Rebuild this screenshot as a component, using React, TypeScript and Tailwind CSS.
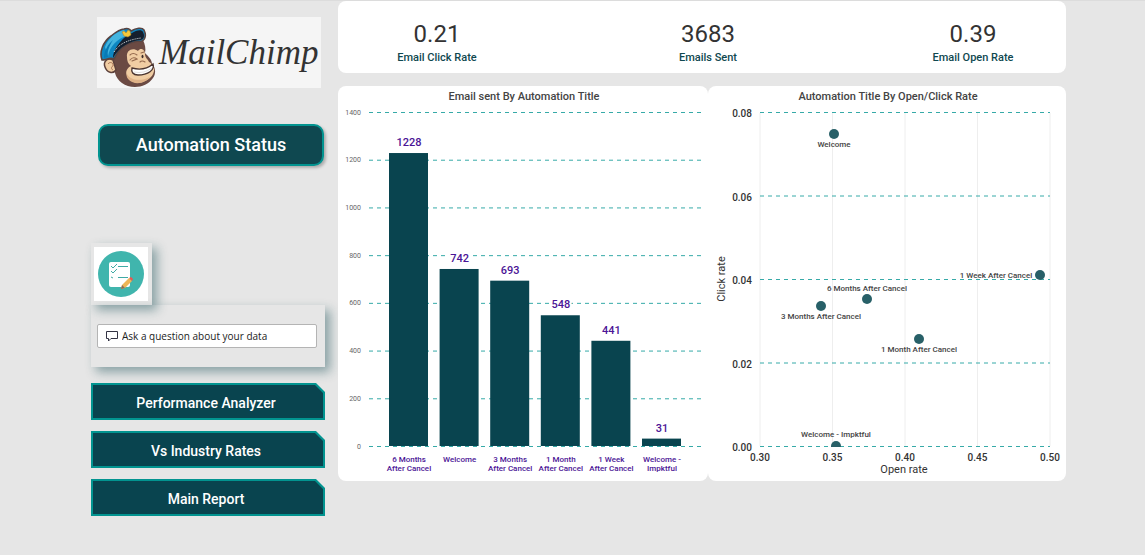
import React from "react";

const automations = [
  { lines: ["6 Months", "After Cancel"], sent: 1228 },
  { lines: ["Welcome"], sent: 742 },
  { lines: ["3 Months", "After Cancel"], sent: 693 },
  { lines: ["1 Month", "After Cancel"], sent: 548 },
  { lines: ["1 Week", "After Cancel"], sent: 441 },
  { lines: ["Welcome -", "Impktful"], sent: 31 },
];

const points = [
  { name: "Welcome", x: 126, y: 48, lx: 126, ly: 61 },
  { name: "6 Months After Cancel", x: 159, y: 213, lx: 159, ly: 205 },
  { name: "3 Months After Cancel", x: 113, y: 220, lx: 113, ly: 233 },
  { name: "1 Month After Cancel", x: 211, y: 253, lx: 211, ly: 266 },
  { name: "1 Week After Cancel", x: 332, y: 189, lx: 288, ly: 192 },
  { name: "Welcome - Impktful", x: 128, y: 360, lx: 128, ly: 351 },
];

const kpis = [
  { value: "0.21", label: "Email Click Rate" },
  { value: "3683", label: "Emails Sent" },
  { value: "0.39", label: "Email Open Rate" },
];

const reports = ["Performance Analyzer", "Vs Industry Rates", "Main Report"];

function Chimp() {
  return (
    <svg viewBox="0 0 58 62" className="h-[62px] w-[58px] shrink-0" aria-hidden="true">
      <path d="M14 30C19 20 32 13 44 14C46 18 47 23 46 27C50 31 53 34 53 38C57 42 57 48 54 52C50 58 43 61 36 61C26 61 18 55 16 47C12 41 12 35 14 30Z" fill="#6b4a43" />
      <path d="M14 34C8 31 4 36 6 41C8 47 14 48 17 44Z" fill="#f0cda3" stroke="#5c403a" strokeWidth="1.5" />
      <path d="M9 38C11 35 15 37 14 40C12 41 12 43 14 44" fill="none" stroke="#a87355" />
      <path d="M28 31C27 24 34 21 39 25C42 21 46 24 46 28C46 32 49 33 50 36C53 37 53 39 51 40L55 42C56 47 52 53 46 55C39 59 30 56 28 50C26 46 28 42 32 40C29 38 28 35 28 31Z" fill="#f0cda3" />
      <path d="M28 48C31 54 41 56 51 51C46 58 35 59 30 54C28 52 27 50 28 48Z" fill="#dfb287" />
      <path d="M33 42C40 44 48 43 54 38C56 44 49 49 39 49C34 49 32 46 33 42Z" fill="#fff" stroke="#49342f" strokeWidth="1.4" />
      <path d="M35 46Q45 48 53 42" fill="none" stroke="#d3d0ce" strokeWidth=".7" />
      <path d="M31 34Q34 30 38 33L33 35M31 29Q34 26 38 29M42 27L45 26M41 36Q43 34 46 36" fill="none" stroke="#94694d" strokeWidth="1.1" strokeLinecap="round" />
      <ellipse cx="43.500" cy="30.500" rx="1" ry="1.800" fill="#3b2c2a" />
      <path d="M3 34C0 26 4 16 12 10C17 6 21 3 25 3C28 2 31 3 32 5C37 2 43 1 45 4C47 8 47 13 43 15C32 15 21 20 15 33C11 31 7 34 3 34Z" fill="#0e87c2" stroke="#594441" strokeWidth="1.6" />
      <path d="M9 30C11 20 18 13 29 9L25 4C16 6 9 13 6 21Z" fill="#45b5df" />
      <path d="M5 32C5 25 9 18 14 14C9 22 8 27 9 31Z" fill="#087ab5" />
      <path d="M14 32C14 22 25 10 33 7C37 4 43 3 44 6C46 10 45 13 42 14C31 15 21 20 14 32Z" fill="#151f2e" />
      <path d="M15 26C20 18 28 14 42 12" fill="none" stroke="#dfe5e7" strokeDasharray="1 1" />
      <path d="M23 6L25 5L27 7L29 4L31 5L32 9L29 11L25 10Z" fill="#f4c93b" stroke="#ad7f20" strokeWidth=".5" />
    </svg>
  );
}

function ChecklistIcon() {
  return (
    <svg viewBox="0 0 54 54" className="h-[54px] w-[54px]" aria-hidden="true">
      <circle cx="27" cy="27" r="23" fill="#40b5ad" />
      <rect x="15" y="15" width="21" height="25" rx="2" fill="#fff" />
      <path d="M17 19L19 21L23 17M17 24L19 26L23 22M17 30L19 31M24 19.5H34M24 30.5H34" fill="none" stroke="#40aaa4" />
      <path d="M28 38L35 31L38 34L31 41L27 42Z" fill="#edb657" />
      <path d="M35 31L37 30L39 32L38 34Z" fill="#f0544f" />
      <path d="M28 38L31 41L27 42Z" fill="#8a6f5a" />
    </svg>
  );
}

function BarChart() {
  return (
    <svg viewBox="0 0 370 395" className="block h-auto w-full" role="img" aria-label="Email sent By Automation Title" fontFamily="Roboto, sans-serif" textAnchor="middle">
      <text x="186" y="14" fontSize="11" fontWeight="500" fill="#444">Email sent By Automation Title</text>
      {[0, 200, 400, 600, 800, 1000, 1200, 1400].map((v) => {
        const y = 360.5 - (v * 334) / 1400;
        return (
          <g key={v}>
            <line x1="31" x2="365" y1={y} y2={y} stroke="#36aaa8" strokeDasharray="4 4" />
            <text x="23" y={y + 2} fontSize="7" textAnchor="end" fill="#666">{v}</text>
          </g>
        );
      })}
      {automations.map((a, i) => {
        const x = 51 + i * 50.6;
        const h = (a.sent * 334) / 1400;
        return (
          <g key={i}>
            <rect x={x} y={360 - h} width="39" height={h} fill="#09444f" />
            <text x={x + 20} y={353 - h} fontSize="11" fontWeight="500" fill="#4b1596" stroke="#fff" strokeWidth="4" paintOrder="stroke">{a.sent}</text>
            {a.lines.map((line, n) => (
              <text key={line} x={x + 20} y={376 + n * 9} fontSize="8" fontWeight="500" fill="#4b1596">{line}</text>
            ))}
          </g>
        );
      })}
    </svg>
  );
}

function ScatterChart() {
  return (
    <svg viewBox="0 0 358 395" className="block h-auto w-full" role="img" aria-label="Automation Title By Open/Click Rate" fontFamily="Roboto, sans-serif" textAnchor="middle" fill="#333">
      <defs>
        <clipPath id="plot"><rect x="40" y="20" width="310" height="341" /></clipPath>
      </defs>
      <text x="180" y="14" fontSize="11" fontWeight="500" fill="#444">Automation Title By Open/Click Rate</text>
      {["0.30", "0.35", "0.40", "0.45", "0.50"].map((t, i) => (
        <g key={t}>
          <line x1={52 + i * 72.5} x2={52 + i * 72.5} y1="27" y2="360" stroke="#eee" />
          <text x={52 + i * 72.5} y="375" fontSize="10" fontWeight="500">{t}</text>
        </g>
      ))}
      {["0.08", "0.06", "0.04", "0.02", "0.00"].map((t, i) => (
        <g key={t}>
          <line x1="52" x2="342" y1={26.5 + i * 83.5} y2={26.5 + i * 83.5} stroke="#36aaa8" strokeDasharray="4 4" />
          <text x="44" y={31 + i * 83.5} fontSize="10" fontWeight="500" textAnchor="end">{t}</text>
        </g>
      ))}
      {points.map((p) => (
        <g key={p.name}>
          <circle cx={p.x} cy={p.y} r="5" fill="#286068" clipPath="url(#plot)" />
          <text x={p.lx} y={p.ly} fontSize="8" fontWeight="500" fill="#444">{p.name}</text>
        </g>
      ))}
      <text x="196" y="387" fontSize="11">Open rate</text>
      <text transform="translate(17 193) rotate(-90)" fontSize="11">Click rate</text>
    </svg>
  );
}

export default function App() {
  return (
    <div className="min-h-screen border-t border-[#dcdcdc] bg-[#e6e6e6] pr-[79px] pl-[91px] font-['Roboto',sans-serif] text-[#333]">
      <div className="grid grid-cols-[234px_minmax(0,1fr)] gap-[13px]">
        <aside className="pt-4">
          <div className="mx-1.5 flex h-[71px] w-[224px] items-center gap-0.5 bg-[#f5f5f5] pt-2 pl-0.5">
            <Chimp />
            <span className="pb-2 font-['Liberation_Serif',serif] text-[35px] leading-none text-[#333] italic">MailChimp</span>
          </div>
          <h1 className="mt-9 ml-[7px] flex h-[42px] w-[226px] items-center justify-center rounded-[10px] border-2 border-[#029490] bg-[#0f4850] pb-0.5 text-[18px] font-medium text-white shadow-[2px_2px_3px_#00000040]">
            Automation Status
          </h1>
          <div className="mt-[77px] flex h-[62px] w-[61px] items-center justify-center bg-[#e6e6e6] pr-0.5 shadow-[5px_5px_10px_#0f485070]">
            <div className="bg-white"><ChecklistIcon /></div>
          </div>
          <div className="flex h-[62px] items-center pr-2 pl-1.5 shadow-[5px_5px_10px_#0f485070]">
            <label className="flex h-6 w-full items-center gap-1 rounded-xs border border-[#b4b4b4] bg-white px-2">
              <svg viewBox="0 0 12 12" className="h-3 w-3" fill="none" stroke="#334" aria-hidden="true">
                <path d="M.5 1.5H11.5V8.500H5L2.5 11V8.5H.5Z" />
              </svg>
              <input aria-label="Ask a question about your data" placeholder="Ask a question about your data" className="min-w-0 flex-1 bg-transparent font-['Open_Sans',sans-serif] text-[10px] outline-none placeholder:text-[#222]" />
            </label>
          </div>
          <nav className="mt-4 flex flex-col gap-[11px]">
            {reports.map((r) => (
              <button key={r} className="h-[37px] bg-[#029490] p-0.5 [clip-path:polygon(0_0,calc(100%-9px)_0,100%_9px,100%_100%,0_100%)]">
                <span className="flex h-full items-center justify-center bg-[#09444f] pt-1 pr-1 text-[14px] font-medium text-white [clip-path:polygon(0_0,calc(100%-8px)_0,100%_8px,100%_100%,0_100%)]">{r}</span>
              </button>
            ))}
          </nav>
        </aside>
        <main>
          <section className="grid h-[72px] grid-cols-[198fr_344fr_186fr] rounded-lg bg-white pt-[17px] text-center">
            {kpis.map((k) => (
              <div key={k.label}>
                <p className="text-[24px] leading-8">{k.value}</p>
                <p className="text-[11px] leading-4 font-medium text-[#0f4850]">{k.label}</p>
              </div>
            ))}
          </section>
          <div className="mt-3 grid grid-cols-[370fr_358fr] pt-px">
            <section className="rounded-lg bg-white"><BarChart /></section>
            <section className="rounded-lg bg-white"><ScatterChart /></section>
          </div>
        </main>
      </div>
    </div>
  );
}
